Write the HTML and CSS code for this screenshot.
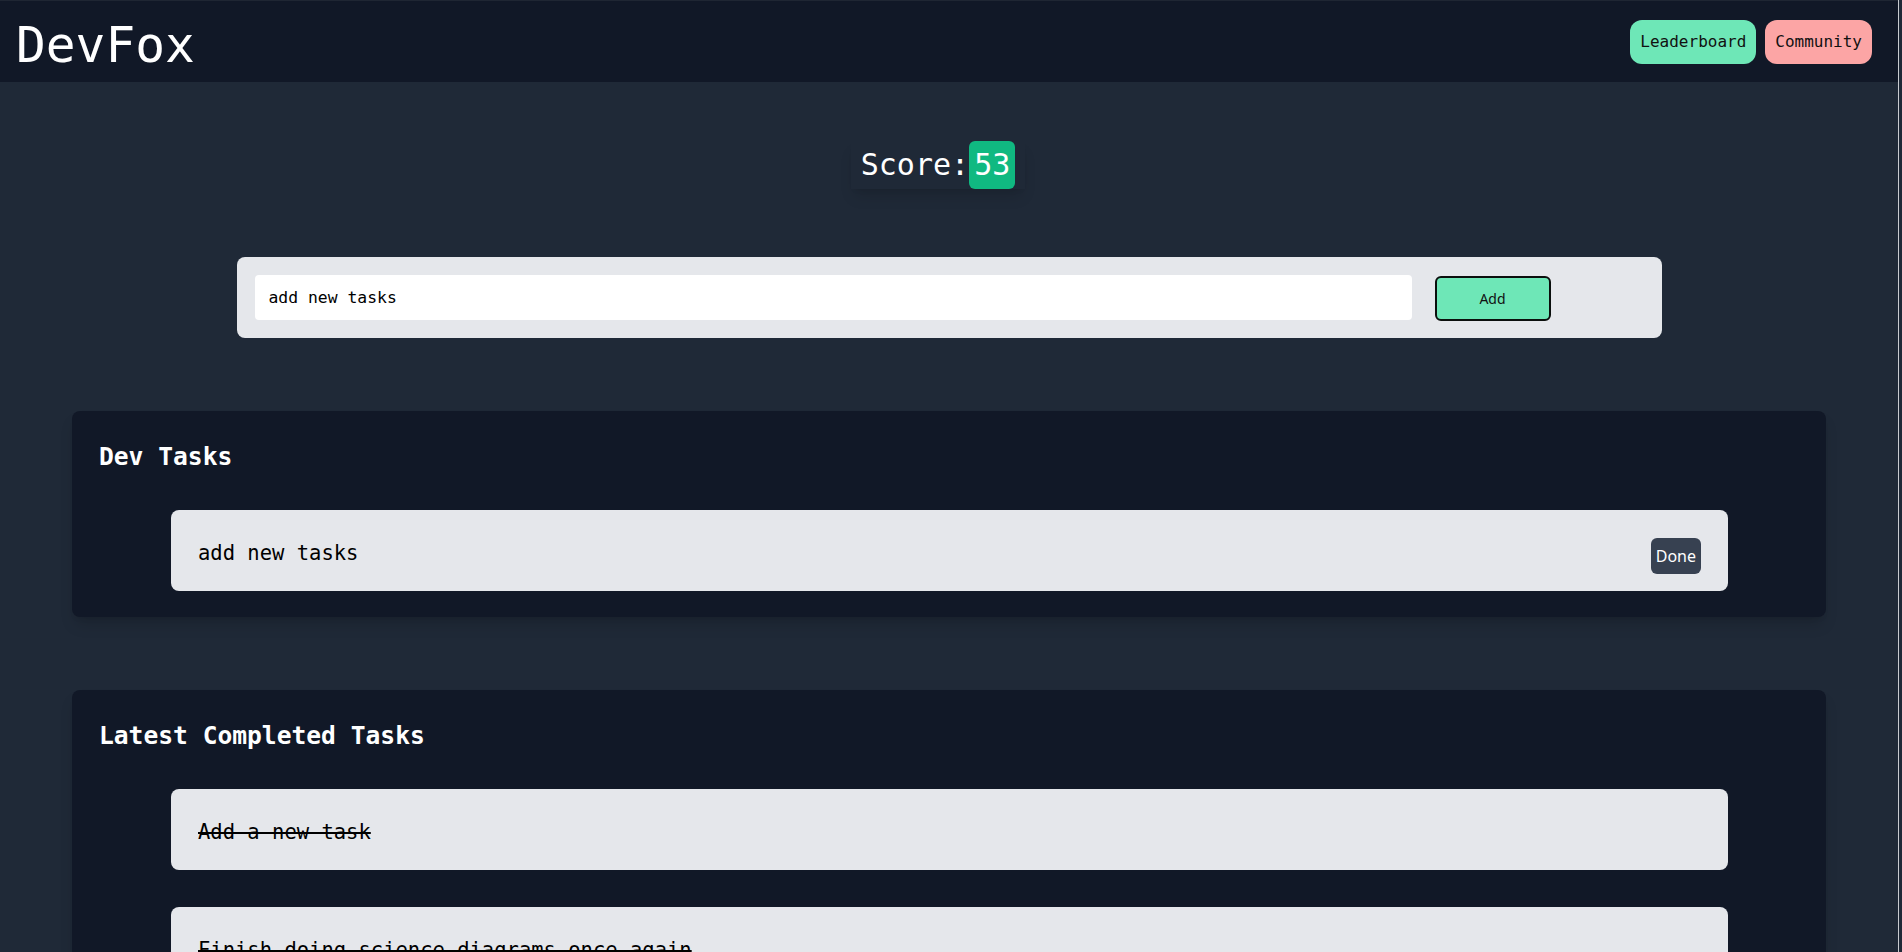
FILE: index.html
```html
<!DOCTYPE html>
<html lang="en">
<head>
<meta charset="utf-8">
<title>DevFox</title>
<link rel="stylesheet" href="styles.css">
</head>
<body>
<div class="page">
  <header class="topbar">
    <h1 class="brand">DevFox</h1>
    <nav class="nav">
      <button class="nav-btn nav-green">Leaderboard</button>
      <button class="nav-btn nav-red">Community</button>
    </nav>
  </header>

  <main class="main">
    <div class="score-row">
      <div class="score"><span class="score-label">Score:</span><span class="score-badge">53</span></div>
    </div>

    <form class="add-form">
      <input class="add-input" type="text" value="add new tasks">
      <button class="add-btn" type="button">Add</button>
    </form>

    <section class="panel">
      <h2 class="panel-title">Dev Tasks</h2>
      <ul class="task-list">
        <li class="task">
          <span class="task-text">add new tasks</span>
          <button class="done-btn">Done</button>
        </li>
      </ul>
    </section>

    <section class="panel">
      <h2 class="panel-title">Latest Completed Tasks</h2>
      <ul class="task-list">
        <li class="task"><span class="task-text done">Add a new task</span></li>
        <li class="task"><span class="task-text done">Finish doing science diagrams once again</span></li>
        <li class="task"><span class="task-text done">Write the weekly report</span></li>
      </ul>
    </section>
  </main>
</div>
</body>
</html>
```

FILE: styles.css
```css
* { box-sizing: border-box; }

html, body {
  margin: 0;
  padding: 0;
  background: #1f2937;
}

body {
  font-family: "DejaVu Sans Mono", "Liberation Mono", monospace;
  color: #000;
  overflow: hidden;
}

.page {
  width: 1899px;
  min-height: 952px;
  background: #1f2937;
  border-right: 1px solid #c8cbd0;
}

.topbar {
  height: 82px;
  background: #111827;
  border-top: 1px solid #1f2633;
  display: flex;
  align-items: center;
  justify-content: space-between;
  padding: 0 26px 0 16px;
}

.brand {
  margin: 6px 0 0 0;
  font-size: 49.5px;
  line-height: 48px;
  font-weight: 400;
  color: #ffffff;
}

.nav {
  display: flex;
  gap: 9px;
}

.nav-btn {
  font-family: "DejaVu Sans Mono", "Liberation Mono", monospace;
  font-size: 16px;
  line-height: 24px;
  padding: 10px 10px;
  border: 0;
  border-radius: 12px;
  color: #111;
}

.nav-green { background: #6ee7b7; }
.nav-red { background: #fca5a5; }

.main {
  display: flex;
  flex-direction: column;
  align-items: center;
  padding-top: 59px;
}

.score-row {
  display: flex;
  justify-content: center;
  width: 100%;
}

.score {
  display: flex;
  align-items: center;
  padding: 0 10px;
  box-shadow: 0 10px 15px -3px rgba(0,0,0,0.12), 0 4px 6px -4px rgba(0,0,0,0.1);
  margin-left: -22px;
}

.score-label {
  font-size: 30px;
  line-height: 36px;
  color: #fff;
}

.score-badge {
  font-size: 30px;
  line-height: 36px;
  color: #fff;
  background: #10b981;
  padding: 6px 5px;
  border-radius: 6px;
}

.add-form {
  margin-top: 68px;
  width: 1425px;
  height: 81px;
  background: #e5e7eb;
  border-radius: 8px;
  display: flex;
  align-items: center;
  padding: 0 111px 0 18px;
}

.add-input {
  flex: 1;
  height: 45px;
  border: 0;
  border-radius: 4px;
  background: #fff;
  padding: 0 14px;
  font-family: "DejaVu Sans Mono", "Liberation Mono", monospace;
  font-size: 16.4px;
  color: #000;
  outline: none;
}

.add-btn {
  margin-left: 23px;
  width: 116px;
  height: 45px;
  margin-top: 2px;
  background: #6ee7b7;
  border: 2px solid #0b0f0d;
  border-radius: 6px;
  font-family: "Noto Sans", "Open Sans", sans-serif;
  font-size: 14px;
  color: #111;
}

.panel {
  margin-top: 73px;
  width: 1754px;
  background: #111827;
  border-radius: 8px;
  box-shadow: 0 10px 15px -3px rgba(0,0,0,0.15), 0 4px 6px -4px rgba(0,0,0,0.12);
  padding: 30px 0 26px 0;
}

.panel-title {
  margin: 0 0 37px 0;
  padding-left: 27px;
  font-size: 24.6px;
  line-height: 32px;
  font-weight: 700;
  color: #fff;
}

.task-list {
  list-style: none;
  margin: 0;
  padding: 0 98px 0 99px;
  display: flex;
  flex-direction: column;
  gap: 37px;
}

.task {
  height: 81px;
  background: #e5e7eb;
  border-radius: 8px;
  display: flex;
  align-items: center;
  justify-content: space-between;
  padding: 5px 27px 0 27px;
}

.task-text {
  font-size: 20.5px;
  line-height: 28px;
  color: #000;
}

.task-text.done {
  text-decoration: line-through;
  text-decoration-thickness: 2px;
}

.done-btn {
  height: 36px;
  margin-top: 6px;
  padding: 0 5px;
  border: 0;
  border-radius: 6px;
  background: #374151;
  color: #fff;
  font-family: "Noto Sans", "Open Sans", sans-serif;
  font-size: 16px;
}
```
